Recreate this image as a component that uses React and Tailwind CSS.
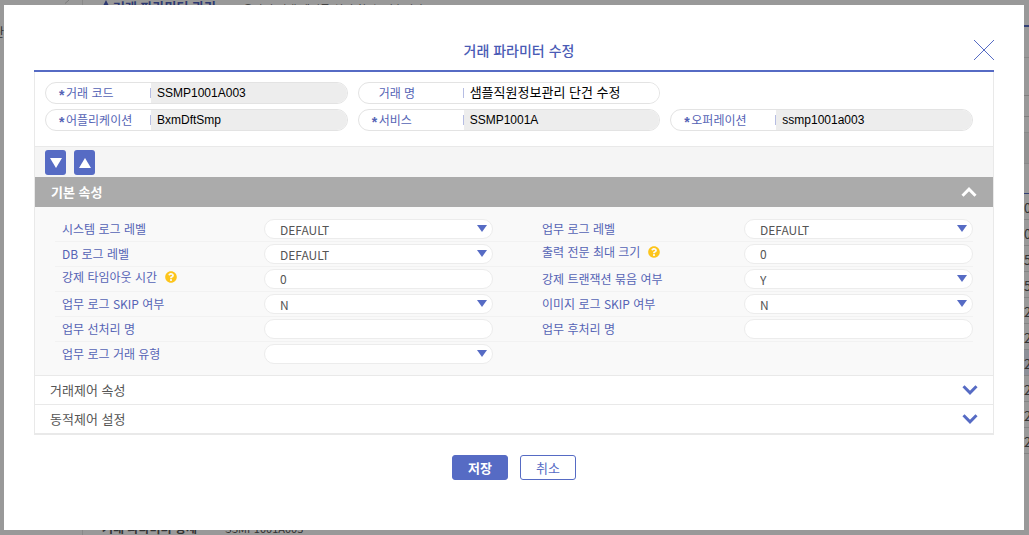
import React, { useState } from "react";
import { FaQuestionCircle } from "react-icons/fa";

const summaryFields = [
    { id: "trxCode", label: "거래 코드", value: "SSMP1001A003", required: true, readOnly: true },
    { id: "trxName", label: "거래 명", value: "샘플직원정보관리 단건 수정", hangul: true },
    { id: "application", label: "어플리케이션", value: "BxmDftSmp", required: true, readOnly: true, newRow: true },
    { id: "service", label: "서비스", value: "SSMP1001A", required: true, readOnly: true },
    { id: "operation", label: "오퍼레이션", value: "ssmp1001a003", required: true, readOnly: true },
];

const basicRows = [
    [
        { id: "sysLog", label: "시스템 로그 레벨", type: "select", options: ["DEFAULT", "DEBUG", "INFO"] },
        { id: "bizLog", label: "업무 로그 레벨", type: "select", options: ["DEFAULT", "DEBUG", "INFO"] },
    ],
    [
        { id: "dbLog", label: "DB 로그 레벨", type: "select", options: ["DEFAULT", "DEBUG", "INFO"] },
        { id: "outSize", label: "출력 전문 최대 크기", type: "text", value: "0", help: true },
    ],
    [
        { id: "timeout", label: "강제 타임아웃 시간", type: "text", value: "0", help: true },
        { id: "bindTrx", label: "강제 트랜잭션 묶음 여부", type: "select", options: ["Y", "N"] },
    ],
    [
        { id: "bizSkip", label: "업무 로그 SKIP 여부", type: "select", options: ["N", "Y"] },
        { id: "imgSkip", label: "이미지 로그 SKIP 여부", type: "select", options: ["N", "Y"] },
    ],
    [
        { id: "preName", label: "업무 선처리 명", type: "text", value: "" },
        { id: "postName", label: "업무 후처리 명", type: "text", value: "" },
    ],
    [{ id: "trxType", label: "업무 로그 거래 유형", type: "select", options: [""] }],
];

const listValues = ["0", "0", "5", "5", "2", "2", "2", "2", "2", "2"];

const Triangle = ({ up, className }) => (
    <svg viewBox="0 0 12 10" preserveAspectRatio="none" className={className} fill="currentColor" aria-hidden="true">
        <path d={up ? "M0 10 6 0l6 10z" : "M0 0h12L6 10z"} />
    </svg>
);

const Chevron = ({ up }) => (
    <svg width="16" height="10" viewBox="0 0 16 10" fill="none" stroke="currentColor" strokeWidth="3" aria-hidden="true">
        <path d={up ? "M1.5 8.7 8 2.2l6.5 6.5" : "M1.5 1.3 8 7.8l6.5-6.5"} />
    </svg>
);

const SummaryField = ({ field }) => (
    <div
        className={`flex h-[22px] overflow-hidden rounded-full border border-[#e3e3e3] bg-white ${
            field.newRow ? "col-start-1" : ""
        }`}
    >
        <label htmlFor={field.id} className="flex w-[105px] shrink-0 items-center pl-[13px] text-xs text-[#5563b5]">
            <span className="w-[7px] pt-1 font-['Liberation_Sans',sans-serif] text-sm leading-none font-bold">
                {field.required ? "*" : ""}
            </span>
            <span className="flex-1">{field.label}</span>
            <span className="h-[10px] w-px bg-[#b6bde3]"></span>
        </label>
        <input
            id={field.id}
            defaultValue={field.value}
            readOnly={field.readOnly}
            className={`min-w-0 flex-1 px-[6px] font-['Liberation_Sans','Noto_Sans_CJK_KR',sans-serif] text-black outline-none ${
                field.hangul ? "pb-px text-[13px]" : "text-xs"
            } ${field.readOnly ? "bg-[#ededed]" : "bg-white"}`}
        />
    </div>
);

const Attribute = ({ item }) => (
    <div className="flex items-center">
        <label
            htmlFor={item.id}
            className={`flex w-[209px] shrink-0 items-center gap-2 pl-[7px] text-xs text-[#5563b5] ${
                item.help ? "pb-1" : ""
            }`}
        >
            {item.label}
            {item.help && <FaQuestionCircle className="h-3 w-3 text-[#fdc51b]" />}
        </label>
        {item.type === "select" ? (
            <div className="relative flex-1">
                <select
                    id={item.id}
                    className="block h-5 w-full appearance-none rounded-full border border-[#ececec] bg-white px-[15px] pt-[2px] text-xs leading-4 text-[#555] outline-none"
                >
                    {item.options.map((option) => (
                        <option key={option}>{option}</option>
                    ))}
                </select>
                <Triangle className="pointer-events-none absolute top-[6px] right-[6px] h-[7px] w-[10px] text-[#566bc4]" />
            </div>
        ) : (
            <input
                id={item.id}
                defaultValue={item.value}
                className="h-5 min-w-0 flex-1 rounded-full border border-[#ececec] bg-white px-[15px] pb-[2px] text-xs text-[#555] outline-none"
            />
        )}
    </div>
);

// page that stays behind the dialog
const Backdrop = () => (
    <div className="flex h-screen overflow-hidden bg-white text-[11px] text-[#555]">
        <div className="flex w-[83px] shrink-0 flex-col border-r border-[#e4e4e4]">
            <svg width="6" height="4" viewBox="0 0 6 4" className="mr-3 self-end" stroke="#ccc" aria-hidden="true">
                <path d="M1 3.500 5 0" />
            </svg>
            <div className="flex w-1 justify-end pt-5 text-xs">단</div>
        </div>
        <div className="flex min-w-0 flex-1 flex-col justify-between">
            <div className="flex h-[14px] items-center pl-[19px]">
                <Triangle up className="mr-[3px] h-2 w-2 shrink-0 self-start text-[#4c5fbd]" />
                <b className="w-[130px] shrink-0 text-[13px] leading-3 text-[#4c5fbd]">거래 파라미터 관리</b>
                <span className="pt-1 leading-3 whitespace-nowrap">온라인 거래 제어를 설정 할 수 있습니다</span>
            </div>
            <div className="flex h-[14px] items-center pl-[19px]">
                <b className="w-[123px] text-xs leading-3">거래 파라미터 상세</b>
                <span>SSMP1001A003</span>
            </div>
        </div>
        <div className="w-[5px] shrink-0 overflow-hidden">
            <div className="h-[27px] border-b-2 border-[#566bc4]"></div>
            <div className="h-[31px] border-b border-[#e4e4e4]"></div>
            <div className="h-[75px] border-b border-[#e4e4e4] pt-[37px]">
                <div className="h-[22px] border-y border-[#d4d4d4]"></div>
            </div>
            <div className="h-[31px] border-b border-[#e4e4e4] bg-[#f4f4f4]"></div>
            <div className="h-[30px] border-b border-[#566bc4]"></div>
            {listValues.map((value, index) => (
                <div
                    key={index}
                    className={`flex h-[26px] items-center border-b border-[#ddd] pt-[2px] text-[13px] ${
                        index === 6 ? "bg-[#eaeffd]" : ""
                    }`}
                >
                    {value}
                </div>
            ))}
        </div>
    </div>
);

const App = () => {
    const [open, setOpen] = useState("basic");
    const toggle = (name) => setOpen(open === name ? "" : name);

    return (
        <div className="relative font-['Noto_Sans_CJK_KR',sans-serif]" lang="ko">
            <Backdrop />
            <div className="fixed inset-0 bg-black/40 py-[5px] pr-[5px] pl-1">
                <div role="dialog" aria-labelledby="dialogTitle" className="h-full overflow-auto bg-white px-[30px]">
                    <header className="grid h-[65px] grid-cols-[1fr_auto_1fr] items-center pt-[25px]">
                        <h1 id="dialogTitle" className="col-start-2 pb-px pl-[10px] text-sm font-medium text-[#4a5bb5]">
                            거래 파라미터 수정
                        </h1>
                        <button aria-label="닫기" className="h-5 w-5 justify-self-end text-[#566bc4]">
                            <svg width="20" height="20" viewBox="0 0 20 20" stroke="currentColor" aria-hidden="true">
                                <path d="m0 0 20 20M20 0 0 20" />
                            </svg>
                        </button>
                    </header>

                    <div className="border-t-2 border-[#566bc4]">
                        <div className="border-x border-b-2 border-[#e9e9e9]">
                            <div className="grid grid-cols-3 gap-x-[10px] gap-y-[5px] border-b border-[#e9e9e9] pt-[10px] pr-5 pb-[15px] pl-[10px]">
                                {summaryFields.map((field) => (
                                    <SummaryField key={field.id} field={field} />
                                ))}
                            </div>

                            <div className="flex h-[30px] gap-2 bg-[#f5f5f5] pt-[3px] pl-[10px]">
                                <button
                                    aria-label="모두 펼치기"
                                    className="flex h-[25px] w-[21px] items-center justify-center rounded-[3px] bg-[#566bc4] text-white"
                                >
                                    <Triangle className="h-[10px] w-3" />
                                </button>
                                <button
                                    aria-label="모두 접기"
                                    className="flex h-[25px] w-[21px] items-center justify-center rounded-[3px] bg-[#566bc4] text-white"
                                >
                                    <Triangle up className="h-[10px] w-3" />
                                </button>
                            </div>

                            <button
                                onClick={() => toggle("basic")}
                                className="flex h-[30px] w-full items-center justify-between bg-[#ababab] px-4 text-[13px] font-bold text-white"
                            >
                                기본 속성
                                <Chevron up />
                            </button>
                            {open === "basic" && (
                                <div className="bg-[#f9f9f9] pt-[10px] pr-5 pb-2 pl-5">
                                    {basicRows.map((row, index) => (
                                        <div
                                            key={index}
                                            className="grid h-[25px] grid-cols-2 gap-x-[42px] border-b border-[#f2f2f2] last:border-transparent"
                                        >
                                            {row.map((item) => (
                                                <Attribute key={item.id} item={item} />
                                            ))}
                                        </div>
                                    ))}
                                </div>
                            )}
                            {["거래제어 속성", "동적제어 설정"].map((name) => (
                                <button
                                    key={name}
                                    onClick={() => toggle(name)}
                                    className="flex h-[29px] w-full items-center justify-between border-t border-[#e9e9e9] px-[15px] text-[13px] text-[#555]"
                                >
                                    {name}
                                    <span className="text-[#566bc4]">
                                        <Chevron />
                                    </span>
                                </button>
                            ))}
                        </div>
                    </div>

                    <div className="flex justify-center gap-3 pt-5">
                        <button className="h-[25px] w-14 rounded-[3px] border border-[#566bc4] bg-[#566bc4] text-[13px] leading-none font-bold text-white">
                            저장
                        </button>
                        <button className="h-[25px] w-14 rounded-[3px] border border-[#566bc4] bg-white text-[13px] leading-none text-[#566bc4]">
                            취소
                        </button>
                    </div>
                </div>
            </div>
        </div>
    );
};

export default App;
